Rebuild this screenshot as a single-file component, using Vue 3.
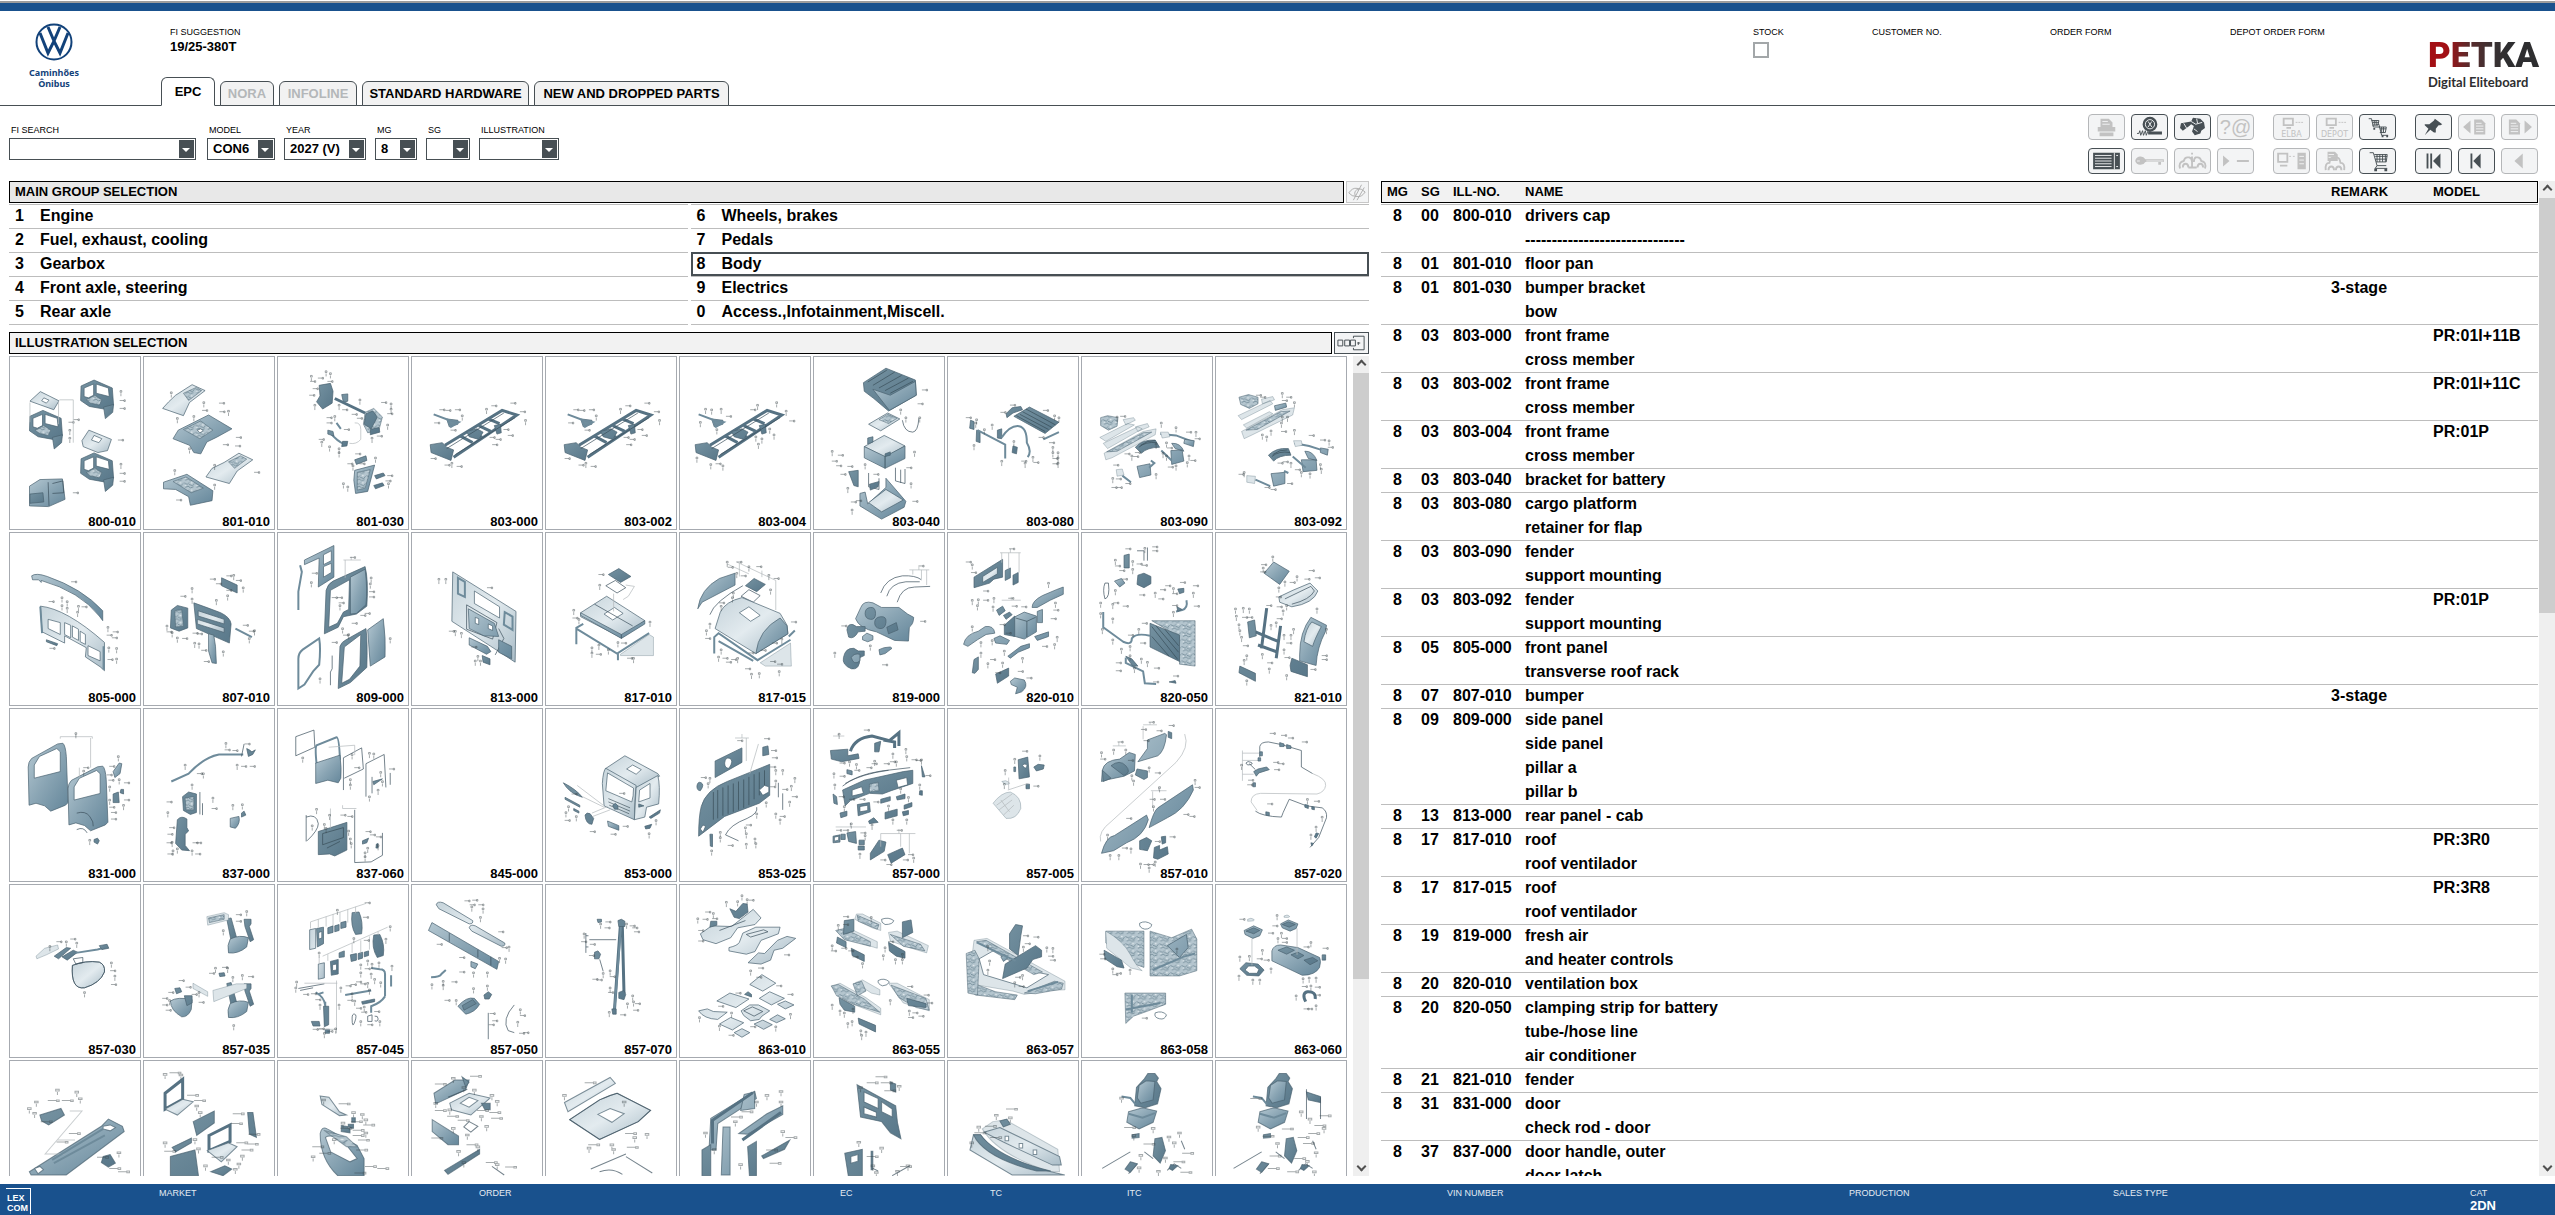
<script setup>
import { ref } from 'vue'

const tabs = [
  { label: 'EPC', state: 'active' },
  { label: 'NORA', state: 'off' },
  { label: 'INFOLINE', state: 'off' },
  { label: 'STANDARD HARDWARE', state: '' },
  { label: 'NEW AND DROPPED PARTS', state: '' }
]

const filters = [
  { id: 'fi', label: 'FI SEARCH', value: '' },
  { id: 'model', label: 'MODEL', value: 'CON6' },
  { id: 'year', label: 'YEAR', value: '2027 (V)' },
  { id: 'mg', label: 'MG', value: '8' },
  { id: 'sg', label: 'SG', value: '' },
  { id: 'ill', label: 'ILLUSTRATION', value: '' }
]

const groups = [
  ['1', 'Engine'], ['2', 'Fuel, exhaust, cooling'], ['3', 'Gearbox'], ['4', 'Front axle, steering'], ['5', 'Rear axle'],
  ['6', 'Wheels, brakes'], ['7', 'Pedals'], ['8', 'Body'], ['9', 'Electrics'], ['0', 'Access.,Infotainment,Miscell.']
]
const selected = ref('8')

/* Toolbar icons: f = filled, s = stroked, n = fine stroke, b = knocked out */
const doc = x => `M${x} 5h8l4 4v12h-12z`
const docLines = x => `M${x + 2} 9h6M${x + 2} 12h8M${x + 2} 15h8M${x + 2} 18h8`
const cars = (x, y) => `M${x} ${y + 8}q-1-8 4-8q1-6 4-6h4q3 0 4 6q5 0 4 8M${x + 3} ${y + 8}q0-4 3-4t3 4M${x + 11} ${y + 8}q0-4 3-4t3 4`
const toolbar = [
  [
    { name: 'Print', off: true, p: [['f', 'M12 4h9l4 4v7H12zM9 13h19v5H9zM11 19h15v4H11z'], ['b', 'M14 7h6M14 10h8']] },
    { name: 'Tyres', p: [['f', 'M11 10a8 8 0 1 0 16 0a8 8 0 1 0-16 0zM17 18h15v3H17z'], ['b', 'M14 10a5 5 0 1 0 10 0a5 5 0 1 0-10 0M17 7l4 6M21 7l-4 6'], ['n', 'M5 20h2l1-3l1 5l2-5l1 5l2-5l1 5l2-5']] },
    { name: 'Find', p: [['f', 'M5 14l1-5l11-2l2-4l8 1l4 4l1 6l-4 3l-1 3l-6 2l-3-4l2-6l-3-2l-2 2l-7 5z'], ['b', 'M17 7l5 3l7-2M20 15l4 3M9 9l3 5M23 4l1 5']] },
    { name: 'Help', off: true, text: '?@' },
    { name: 'List', p: [['f', 'M4 4h29v18H4z'], ['b', 'M6 7h18M6 10h18M6 13h18M6 16h18M6 19h18M27 4v18M29 7h2M29 19h2']] },
    { name: 'Key', off: true, p: [['f', 'M3 13a6 6 0 0 1 11-2h20v3h-3v3h-3v-3H14a6 6 0 0 1-11-1z'], ['b', 'M5 13h3M15 13h18']] },
    { name: 'Vehicle info', off: true, p: [['s', 'M5 21q-2-7 4-8q1-4 4-4h2q3 1 3 5v6M8 20q0-4 3-4t3 4M32 21q2-7-4-8q-1-4-4-4h-2q-2 1-2 5M24 20q0-4 3-4t3 4M18 4v2M18 8v7M14 20h9']] },
    { name: 'Next line', off: true, p: [['f', 'M5 7l7 6l-7 6zM20 12h13v2H20z']] }
  ],
  [
    { name: 'Elba', off: true, sub: 'ELBA', p: [['s', 'M10 4h10v7H10zM13 14h5'], ['n', 'M23 8h2M26 8h2M29 8h2']] },
    { name: 'Depot', off: true, sub: 'DEPOT', p: [['s', 'M10 4h10v7H10zM13 14h5'], ['n', 'M23 8h2M26 8h2M29 8h2']] },
    { name: 'Transfer carts', p: [['n', 'M9 4h3l2 9h7M12 6h8l-1 5h-6M13 8h7M15 6v5M17 6v5M17 10h3l3 12h7M20 13h8l-1 6h-6M21 15h7M23 13v6M25 13v6'], ['f', 'M14 14h2v2h-2zM23 22h2v2h-2zM28 22h2v2h-2z']] },
    { name: 'Server', off: true, p: [['s', 'M4 5h10v9H4zM6 18h8'], ['n', 'M16 8h2M20 8h2'], ['f', 'M25 4h9v18h-9z'], ['b', 'M27 8h5M27 12h5M27 16h5']] },
    { name: 'Vehicle sheet', off: true, p: [['f', 'M11 3h8l3 3v7H11z'], ['b', 'M12 6h6M12 9h8'], ['s', cars(9, 15)]] },
    { name: 'Cart', p: [['n', 'M10 4h4l4 14h10M15 6h14l-1 8H17M16 8h13M16 11h12M18 6v8M21 6v8M24 6v8M27 6v8M18 18l-2 3h13'], ['f', 'M15 21h3v3h-3zM26 21h3v3h-3z']] }
  ],
  [
    { name: 'Pin', p: [['f', 'M20 4l8 6l-2 1l-2 0l-3 4l0 4l-2 0l-4-3l-6 6l4-7l-4-4l0-1l5 0l5-4z']] },
    { name: 'Previous page', off: true, p: [['f', 'M4 13l8-7v14z'], ['f', doc(16)], ['b', docLines(16)]] },
    { name: 'Next page', off: true, p: [['f', 'M32 13l-8-7v14z'], ['f', doc(7)], ['b', docLines(7)]] },
    { name: 'First', p: [['s', 'M12 5v16M16 5v16'], ['f', 'M18 13l8-8v16z']] },
    { name: 'Back to start', p: [['s', 'M13 5v16'], ['f', 'M15 13l8-8v16z']] },
    { name: 'Back', off: true, p: [['f', 'M13 13l9-8v16z']] }
  ]
]

/* Exploded views. Each part is [style, path]; 'c' lists callout positions. */
const cab = (x, y) => [
  ['D', `M${184 + x} ${106 + y}l30-18l42 24l3 52l-22 12l-34-8l-20-18zm7 6l0 26l10 4l12-8l0-34zm28-12l0 28l30 10l-2-26z`],
  ['H', `M${196 + x} ${148 + y}l20-14l16 14l-6 16l-20-6z`],
  ['D', `M${236 + x} ${170 + y}l23-8l-2 24l-17 19z`],
  ['c', `${276 + x},${124 + y} ${276 + x},${150 + y} ${276 + x},${174 + y}`]
]
const frame = (x, y) => [
  ['F', `M${1010 + x} ${286 + y}L${1142 + x} ${180 + y}l34 14L${1030 + x} ${322 + y}`],
  ['F', `M${1046 + x} ${258 + y}l28 20M${1066 + x} ${242 + y}l30 20M${1088 + x} ${226 + y}l28 18M${1110 + x} ${206 + y}l26 14`],
  ['D', `M${976 + x} ${284 + y}l28-6l10 14l16 8l-6 32l-46-24z`],
  ['D', `M${1060 + x} ${244 + y}l24-8l14 10l-10 22l-22-8zM${1124 + x} ${226 + y}l14-4l2 26l-10 4zM${1014 + x} ${206 + y}l26 4l0 12l-20 8z`],
  ['K', `M${1014 + x} ${296 + y}L${1146 + x} ${188 + y}M${1034 + x} ${314 + y}L${1172 + x} ${202 + y}`],
  ['S', `M${984 + x} ${192 + y}l36 18l22 6l-18 14l-8-22`],
  ['c', `${1000 + x},${178 + y} ${1014 + x},${180 + y} ${1036 + x},${178 + y} ${1050 + x},${198 + y} ${988 + x},${218 + y} ${1026 + x},${240 + y} ${1106 + x},${178 + y} ${1120 + x},${166 + y} ${1164 + x},${158 + y} ${1186 + x},${184 + y} ${1196 + x},${212 + y} ${1158 + x},${256 + y} ${1148 + x},${238 + y} ${1116 + x},${262 + y} ${1130 + x},${268 + y} ${1122 + x},${284 + y} ${980 + x},${326 + y} ${1012 + x},${346 + y} ${1026 + x},${342 + y} ${1040 + x},${350 + y}`]
]
const mirror = (x, y) => [
  ['D', `M${516 + x} ${655 + y}l10-3l14 66l-14 4z`],
  ['M', `M${524 + x} ${716 + y}q22-14 42-4l-4 28q-20 22-42 18q-4-24 4-42z`],
  ['D', `M${556 + x} ${656 + y}l16 0l0 14l-4 8l10 40l-8 6l-12-46z`]
]
const seat = x => [
  ['D', `M${1282 + x} 84l4-16l8 0l4 14l-2 10l5 22l-4 46l-14 12l-12-6l2-56z`],
  ['M', `M${1276 + x} 104l8-14l10 2l-2 56l-14 10l-4-16z`],
  ['M', `M${1264 + x} 184l16-12l16 10l-4 34l-16 20l-14-20z`],
  ['S', `M${1264 + x} 190l16 12l14-14M${1256 + x} 138l10 4l6 20`],
  ['D', `M${1294 + x} 266l8-4l4 40l-6 38l-8-22z`],
  ['K', `M${1234 + x} 356l32-50M${1264 + x} 372l10-30M${1308 + x} 362l8-20l8 14M${1282 + x} 306l10 20M${1324 + x} 272l4 26`],
  ['D', `M${1266 + x} 336l8 6l-8 26l-6-10zM${1268 + x} 254l8-4l0 12l-8 2zM${1312 + x} 344l8 4l-6 14l-4-6z`],
  ['c', `${1256 + x},144 ${1262 + x},232 ${1292 + x},236 ${1270 + x},258 ${1284 + x},282 ${1310 + x},262 ${1316 + x},280 ${1322 + x},250 ${1328 + x},310 ${1278 + x},318 ${1306 + x},326 ${1318 + x},336 ${1276 + x},356 ${1298 + x},366 ${1326 + x},368`]
]
const door = (x, y, s) => ['M', `M${x} ${y + 80 * s}q0-16 8-26l60-${44 * s}l12-2q6 6 8 40l4 ${140 * s}l-6 8l-34 18l-14-16l-20-8l-16 6zm14-6l0 40l60-20l0-60l-8-10l-40 24z`]

const art = [
  { id: '800-010', at: [20, 18], p: [...cab(0, 0), ...cab(-118, 92), ...cab(0, 221), ['L', 'M66 152l24-29l43 28l-12 27z'], ['W', 'M98 142l12 7l-6 9l-11-7z'], ['L', 'M186 272l16-32l52 28l-9 34l-22 6l-34-18z'], ['W', 'M214 256l18 10l-7 12l-17-8z'], ['M', 'M65 410l24-20l52-2l6 62l-38 22l-44-2z'], ['D', 'M66 434l30-4l2 28l-32 4z'], ['K', 'M108 398l2 72M118 402l24-8l2 36l-26 2'], ['T', 'M134 148h32v130M66 156v60M132 152v70'], ['c', '170,208 168,430 272,270'] ] },
  { id: '801-010', at: [325, 18], p: [['L', 'M398 134l38-32l30 18l-36 36l-14 40l-48-22l14-20z'], ['H', 'M416 128l30-18l12 10l-30 30z'], ['M', 'M404 240l70-46l54 42l-36 26l-22 14l-14 36l-16-4l-10-22l-38-20z'], ['H', 'M416 238l40-26l28 28l-30 26z'], ['W', 'M448 240l8-4l6 6l-8 6z'], ['L', 'M510 338l34-28l32 20l-36 34l-18 38l-54-20l14-26z'], ['H', 'M520 336l28-18l14 10l-28 28z'], ['M', 'M370 398l54-24l60 50l-2 30l-50 14l-4-26l-30-22l-28-2z'], ['H', 'M392 396l30-14l40 34l-28 14z'], ['c', '388,128 402,206 463,158 501,158 520,184 540,262 510,284 440,200 430,298 488,348 582,368 396,364 402,452 488,408 462,180 538,288 502,184'] ] },
  { id: '801-030', at: [629, 18], p: [['D', 'M724 104l26-6l6 24l-2 36l-22 18l-14-22l8-18z'], ['H', 'M830 186l20-12l20 26l-8 40l-26 8l-10-26z'], ['D', 'M832 190l16-8l10 18l-14 36l-16-14zM776 132l14-2l0 22l-10 4zM842 238l20-6l2 14l-22 8z'], ['F', 'M760 144l70 44'], ['S', 'M750 248q14 24 34 36M764 218l10 18'], ['D', 'M744 240l12 4l2 14l-14-6zM778 274l12 0l-2 14l-12 2z'], ['T', 'M806 218q14-2 14 20v30q-10 16-26 12'], ['M', 'M806 362l46-16l-16 80l-28 6l-4-40z'], ['H', 'M812 368l30-8l-12 56l-18 6z'], ['D', 'M806 330l26-12l2 14l-24 12zM852 378l20-8l4 8l-20 10zM850 408l20-8l4 8l-20 10z'], ['c', '706,78 706,92 724,82 740,64 750,70 746,92 712,114 704,134 714,166 770,166 780,178 802,192 818,150 814,204 870,156 890,162 890,178 884,190 882,226 846,266 860,258 744,202 760,200 744,218 784,238 726,268 730,278 748,292 770,298 770,310 810,312 820,342 792,342 802,350 854,326 884,378 884,404 880,394 780,404 790,414'] ] },
  { id: '803-000', at: [934, 18], p: frame(0, 0) },
  { id: '803-002', at: [1238, 18], p: frame(304, 0) },
  { id: '803-004', at: [-25, 78], p: frame(-966, 60) },
  { id: '803-040', at: [280, 78], p: [['D', 'M394 156l52-44l68 36l2 46l-64 48l-34-38l-22-22z'], ['N', 'M404 154l44-36M416 164l50-40M430 172l52-38M444 180l54-38M456 188l52-36'], ['M', 'M416 176l40 18l58-42l2 42l-62 46z'], ['L', 'M406 282l44-34l28 18l-44 36z'], ['H', 'M430 268l20-16l22 12l-20 16z'], ['K', 'M484 270q4 36 24 36q12-2 14-42M490 418v44l-22-8v-40M480 420v40M406 430v42l24 8v-34'], ['L', 'M396 350l46-34l48 32l-46 34z'], ['M', 'M396 350l48 30v36l-48-32zM444 380l46-32v38l-46 30z'], ['D', 'M404 324l12-4l0 16l-12 6zM444 372l12-6l0 10l-12 4z'], ['M', 'M386 492l12-4l6 36l42-50l0-28l46 70l-4 18l-52 36l-50-40z'], ['L', 'M406 520l40-40l40 32l-50 36z'], ['D', 'M360 426l22-4l0 50l-10-4zM408 464l22-8l-2 16l-18 10z'], ['c', '532,178 522,220 524,264 480,240 492,264 512,368 322,366 338,376 324,394 334,408 360,410 398,406 344,434 420,434 496,414 504,464 358,478 368,518 380,514 510,516 368,544'] ] },
  { id: '803-080', at: [584, 78], p: [['D', 'M772 230l68 46l-32 34l-72-52z'], ['N', 'M764 236l68 48M756 244l68 48M750 252l66 46M742 256l66 48'], ['D', 'M718 250l14-18l20-4l4 10l-22 10l-14 14zM636 270l8 4l0 24l-10-4zM650 300l8 4v34l-9-4zM698 300l10-4v30l-10-2zM734 348l10 4l-2 20l-10-4z'], ['S', 'M652 300l64 44l0 42M708 322q20-38 40-34q18 4 18 50q12 26 2 44M804 328l36-22'], ['c', '628,262 650,270 648,280 644,348 668,300 686,286 708,246 730,224 736,336 806,240 830,258 840,264 796,322 820,338 826,354 826,370 828,386 828,402 838,370 838,386 838,402 756,394 780,384 784,398 762,402 708,396'] ] },
  { id: '803-090', at: [889, 78], p: [['H', 'M932 262l16-6l24 6l-2 26l-20 12l-18-14z'], ['P', 'M930 322l64-42l16 4l-66 50zM938 340l80-50l10 6l-80 60zM984 268l24-6l4 8l-22 14zM1012 290l28-10l4 10l-26 14z'], ['P', 'M940 370l90-66l30-8l-2 18l-100 70l-14 6z'], ['H', 'M946 366l84-58l20-2l-80 58z'], ['D', 'M1012 352q16-24 46-22l10 22q-28 0-42 18z'], ['N', 'M1024 346q16-16 34-14M1020 352q16-18 42-14'], ['M', 'M1094 362l26-2l4 34l-28 10zM1096 340q20-2 28 24l-20-8zM1016 410l30-8l2 34l-26 8z'], ['S', 'M1070 312l36 4l40 20M1072 362l24 30M982 438l20 20M1048 392l8 8l-12 14'], ['P', 'M1070 306l18 0l4 14l-18 4zM968 420l14-2l4 18l-16 4z'], ['M', 'M1126 328l22 4l-2 18l-22-10z'], ['c', '970,262 980,258 1072,280 1106,294 1132,306 1152,308 1152,326 1060,344 1084,340 1088,354 1076,372 1084,380 1136,380 1132,400 1142,392 1090,412 1106,410 990,372 1004,380 1014,368 1010,380 1060,436 964,406 960,448 970,448 960,474 972,474 992,462'] ] },
  { id: '803-092', at: [1193, 78], p: [['H', 'M1246 200l22-8l22 8l0 20l-20 14l-20-12z'], ['P', 'M1244 256l74-46l6 10l-72 48zM1256 284l60-40l8 6l-60 44zM1298 206l26-8l4 10l-28 12z'], ['M', 'M1328 226l26-8l2 12l-26 10z'], ['P', 'M1252 304l94-66l28-6l-4 22l-96 62l-16 10z'], ['H', 'M1262 300l80-56l22-2l-76 56z'], ['D', 'M1314 376q18-24 46-20l6 20q-28 0-40 18z'], ['N', 'M1324 374q16-16 34-14M1322 380q16-18 42-12'], ['M', 'M1390 390l34 0l2 32l-32 4zM1398 364q18-2 28 28l-20-6zM1320 432l32-4l0 34l-26 8zM1434 354l18 4l-2 18l-16-8z'], ['S', 'M1374 340l34 8l28 12M1370 380l30 34M1284 450l34 20M1350 424l10 6'], ['P', 'M1372 332l18 0l2 14l-16 4zM1264 438l20 2l-2 22l-18-4z'], ['c', '1288,194 1298,200 1346,190 1358,200 1348,210 1374,218 1346,262 1358,262 1344,280 1346,304 1320,304 1300,316 1310,322 1374,302 1410,316 1436,330 1454,334 1454,352 1248,434 1258,430 1338,400 1350,396 1366,402 1378,420 1390,430 1410,434 1434,406 1436,420 1360,462 1308,474 1322,480'] ] },

  { id: '805-000', at: [20, 546], p: [['M', 'M70 676q10-10 36 2q80 36 128 104l0 30l-8-14q-44-74-134-108l0 6l-6-8l-14 0z'], ['L', 'M90 768q60 8 148 110l0 86l-10-12l-34-30l2-28l-50-36l0 22l-52-34z'], ['W', 'M108 808l28 10v36l-28-18zM146 818l14 8v38l-14-10zM164 828l14 10v34l-14-10zM182 844l12 10v30l-12-8zM200 888l28 18v28l-28-16z'], ['D', 'M104 870l26 12l-2 6l-24-12z'], ['S', 'M236 890v70M90 770l4 80'], ['c', '112,754 164,694 140,744 140,768 152,756 152,776 178,770 188,770 176,788 114,896 246,834 246,856 260,846 258,864 248,896 266,898 248,930 266,930'] ] },
  { id: '807-010', at: [325, 546], p: [['D', 'M504 682l36 22v24l-36-22zM440 758q30 14 62 30q22 14 24 34l-4 58l-76-44z'], ['L', 'M450 782l60 26v14l-60-24zM448 808l62 26v14l-62-26z'], ['D', 'M388 780l14-14l24 8v60l-20 10l-20-10z'], ['H', 'M396 782l16-4l4 50l-18 4z'], ['M', 'M474 852l12 4l4 34l2 52l-10-2l-8-36z'], ['S', 'M536 836l38 26'], ['c', '480,686 494,700 518,676 532,676 540,690 554,714 518,720 518,738 412,738 436,716 436,748 492,752 378,830 380,846 390,850 402,866 416,866 440,850 450,852 442,882 452,884 460,902 508,908 466,936 556,826 570,844 580,844 568,868'] ] },
  { id: '809-000', at: [629, 546], p: [['M', 'M690 628l68-44v96l-36 30l2-88l-34 20z'], ['W', 'M734 612l18-12v30l-18 12zM734 648l18-10v28l-18 14z'], ['S', 'M680 644l4 20l-8 60v56'], ['D', 'M740 720q4-20 16-28l74-44q8 40 4 120l-24 24l-30 8l-12 32l-32 20zm10 0l-4 112l20-12l14-34l12-8l2-90z'], ['M', 'M796 680l34-24q6 60 2 108l-22 26l-14 2z'], ['D', 'M772 890q4-14 14-20l46-34q4 40 2 118l-38 46l-28 18zm10 2l-6 110l18-12l24-40l2-96z'], ['M', 'M836 840l36-34q6 60 4 116l-34 28z'], ['S', 'M676 1018v-90q0-18 10-28l38-34q4 30 0 80l-14 20l-20 40z'], ['K', 'M754 918v40l-4 10v40'], ['T', 'M774 650h0M780 628h40M784 628v54M798 618v10'], ['c', '710,668 706,698 798,620 844,684 842,702 842,724 842,740 756,742 768,742 772,758 772,768 822,796 832,790 778,838 782,856 792,856 802,820 756,878 726,990 888,868'] ] },
  { id: '813-000', at: [934, 546], p: [['L', 'M1028 664l146 120l-2 154l-56-48l-90-76z'], ['W', 'M1078 722l58 48v34l-58-44z'], ['S', 'M1040 682l16 12v46l-16-10zM1148 786l18 14v40l-20-16z'], ['K', 'M1060 764l70 54l-10 50l-60-30zM1134 836l12 30l-20 50'], ['M', 'M1064 776l60 44l10 40l-34-2l-34-22zM1134 870l30 20v38l-30-20z'], ['W', 'M1080 802l8 4v18l-8-4zM1110 822l10 6v14l-10-6z'], ['M', 'M1066 864l42 26l8 16l-10 8l-40-28z'], ['D', 'M1096 918l18 10v18l-16-8z'], ['c', '996,688 1012,688 1110,712 1022,844 1034,846 1048,852 1074,892 1086,922 1080,936 1092,936'] ] },
  { id: '817-010', at: [1238, 546], p: [['D', 'M1382 672l24-18l28 24l-24 18z'], ['K', 'M1376 706l22-16l24 22l-20 16z'], ['L', 'M1318 788l60-50l88 74l-54 52l-94-64z'], ['W', 'M1372 792l24-20l20 18l-24 20z'], ['M', 'M1318 788l94 66v12l-94-70zM1412 854l54-42v10l-54 44z'], ['K', 'M1350 762l88 66'], ['S', 'M1308 884v-50l16-12M1308 836l94 76l74-62M1404 912l0 20'], ['P', 'M1410 914l66-60l10 8v56l-76 0z'], ['T', 'M1422 704l20 4l-14 30l-12 10M1394 730v54'], ['c', '1362,672 1362,706 1302,782 1302,804 1314,810 1344,896 1344,912 1356,914 1360,888 1382,902 1404,880 1414,880 1428,926 1440,928 1478,818'] ] },
  { id: '817-015', at: [-25, 606], p: [['M', 'M16 836q6-60 50-92l36-16v36l-76 52z'], ['D', 'M126 766l20-22l26 18l-20 22z'], ['K', 'M116 798l18-20l26 18l-16 20zM44 854q10-40 76-88'], ['L', 'M56 896L68 846Q80 814 118 802L206 850L222 886L224 912L150 972z'], ['M', 'M150 972Q156 900 206 864L222 888L224 912z'], ['W', 'M112 848l22-18l26 26l-22 18z'], ['S', 'M54 972v-50l10-12l90 82l76-62M64 934l80 60M226 920l14-18'], ['P', 'M160 1000l70-60l2 70l-60 0z'], ['T', 'M84 700l50 30M106 694l90 56v90M112 698v40M164 720v20'], ['c', '84,696 88,710 108,694 106,730 118,736 134,710 154,708 180,736 194,744 184,780 98,790 96,804 68,818 70,830 44,884 36,904 36,926 70,962 64,984 76,986 96,990 108,988 84,998 136,970 164,962 190,940 210,930 234,876 186,996 202,1004 128,1018 140,1036 158,1034 204,1028'] ] },
  { id: '819-000', at: [280, 606], p: [['K', 'M434 788q12-46 50-52q30-2 44 12M448 798q8-40 44-44l32 0M472 816q10-46 40-46l36-2'], ['M', 'M388 832q6-22 28-14l20 14l40 0l20 20l14 10q0 20-10 30l-2 42l-32-2l-42-26q-40-10-48-40z'], ['D', 'M398 850q0-16 12-18t12 18t-12 18t-12-18M420 878q0-16 14-18t12 18t-14 18t-12-18M448 892l22-14l4 22l-22 12z'], ['D', 'M356 900q2-20 14-16l8 6l20 0v14l-16 2q-10 24-22 16zM348 984q4-30 24-28l10 8l14 0l0 14l-10 6q0 40-20 34q-22-12-18-34z'], ['M', 'M366 984q6-14 20-10l0 20q-14 16-20-10zM392 920l10-10l14 8v12l-12 6l-12-6zM430 960l12-6l14-2l4 4l-16 16l-12 4z'], ['T', 'M500 718h46M522 708v10M508 718v14M528 718v28M540 718v46'], ['c', '346,888 528,874 410,950 328,972 440,1006 524,706'] ] },
  { id: '820-010', at: [584, 606], p: [['D', 'M644 740l66-54v54l-20 6l-10 12l-36 14z'], ['L', 'M664 738l34-28v20l-34 26z'], ['D', 'M716 720l12-8v30l-12 8zM734 734l12-8v30l-12 8z'], ['M', 'M778 832q0-20 24-36l32-18l16-8v22l-30 18l-30 22z'], ['M', 'M736 862l24-16l28 12v48l-28 22l-26-10z'], ['N', 'M740 864l26 10l20-12M766 874v48'], ['D', 'M714 886l24-28v62l-24-6zM696 840l14-12l6 14l-14 14zM712 856l14-10l6 8l-14 14z'], ['M', 'M620 944q4-30 34-40l16-14q20-4 22 20l-20 4l-20 16l-22 20zM690 926l14-8l22 14l-6 12l-26-4zM722 980l30-30l20-8v12l-26 14l-18 18zM784 920l32-14v14l-26 12zM790 844l12-6v40l-12 0z'], ['D', 'M694 1034l30-18v24l-26 22zM640 1030l4-40l10-8v38l-8 12z'], ['M', 'M728 1056l10-10l22 6q10 20-6 36l-14 6l4-20l-14-8z'], ['T', 'M704 666h48M728 654v12M708 666v30M724 666v50M748 666v60M708 810h44M730 800v10'], ['c', '628,694 640,704 728,654 640,726 816,760 832,820 830,840 668,782 640,812 654,810 668,810 690,806 652,828 688,832 726,804 756,830 706,884 640,892 824,866 836,924 830,946 804,950 686,934 660,940 714,966 756,988 660,972 684,990 676,1004 696,1030 710,1002 748,1026 768,1046 720,910 734,828'] ] },
  { id: '820-050', at: [889, 606], p: [['D', 'M986 674l12-4v42l-12 0zM1018 734l14-6l16 10v22l-16 12l-16-10z'], ['M', 'M964 752l16-8l8 14l-12 12z'], ['H', 'M1050 872h100v138l-36-6v-82z'], ['D', 'M1046 880l68 36v80l-68-44z'], ['N', 'M1050 890l60 100M1050 920l40 60M1060 888l52 80M1080 898l32 50'], ['S', 'M938 846v46l46 44q20 12 20-10q10-18 42-8M990 984v16l40 26l4 36l26 2M1130 810q4 24-10 30l-14 4'], ['K', 'M942 758q-6 20 0 48q12-4 8-48zM1016 660h16v30M1040 650v40'], ['D', 'M1110 776l14-2l0 12l-10 4zM1108 830l12 8l-10 6zM990 980l14 8l14 22l-12 0zM1090 1058l14-4l2 8z'], ['c', '992,654 966,690 968,706 1006,694 1018,700 1006,718 1030,704 1034,654 1054,660 1054,648 978,720 984,746 1024,794 966,782 986,828 960,824 964,818 932,820 932,852 960,868 936,900 998,916 960,932 1000,952 1030,880 1020,900 1026,940 1058,790 1068,806 1084,766 1072,778 1100,776 1100,790 1118,756 1148,766 1146,790 1100,826 1150,828 1100,848 980,960 970,1000 970,1024 1000,980 1010,1018 1040,1000 1058,1016 1056,1058 1102,1040 1026,990'] ] },
  { id: '821-010', at: [1193, 606], p: [['M', 'M1304 728l22-34l36 28l-22 40z'], ['L', 'M1338 800q30-20 72-42l18 24q-10 38-60 48l-28-14z'], ['K', 'M1352 806l60-38l8 14q-10 26-52 40'], ['M', 'M1386 976q0-70 26-114l36 24l-2 18q-20 50-22 104l-38-14z'], ['L', 'M1396 936q4-40 18-60l22 14q-16 40-20 60z'], ['F', 'M1310 834l-12 122M1342 888l-10 98M1284 906l54 30M1290 946l46 22'], ['D', 'M1266 876l16-6l4 48l-16 6zM1364 1008l4-22l36 20v36l-38-16zM1246 1030l2-20l36 22v24z'], ['c', '1324,680 1300,702 1302,714 1298,724 1352,756 1366,756 1380,740 1410,720 1400,746 1424,742 1338,774 1334,800 1336,830 1348,844 1356,828 1238,838 1256,836 1270,838 1240,860 1256,862 1268,862 1312,826 1320,888 1336,866 1332,880 1246,886 1248,904 1426,838 1448,900 1372,900 1366,918 1350,918 1252,924 1258,948 1358,940 1300,976 1350,962 1264,980 1258,994 1314,1000 1316,1020 1414,1020 1440,990 1440,978 1356,1040 1264,1056 1354,984'] ] },

  { id: '831-000', at: [20, 24], p: [door(62, 120, 1), door(154, 192, 0.93), ['M', 'M258 214l14-26l6 2l-4 30l-12 12z'], ['D', 'M258 282l12-6l2 32l-14 0zM276 268l6 0v14l-8-4zM214 420l8-4l4 8l-4 10l-8-6z'], ['T', 'M136 114v-6h74v6M172 100v8M206 112v90M180 202v30'], ['K', 'M174 340q20-8 30 10t8 30M174 390q16-10 24 10'], ['c', '172,100 192,202 190,214 252,198 246,224 270,170 250,240 272,240 286,248 250,262 250,302 252,322 282,318 286,300 256,338 256,358 204,424'] ] },
  { id: '837-000', at: [325, 24], p: [['S', 'M388 244l40-24q36-50 70-58l56 0'], ['D', 'M562 144l6 4l6 6l8-6l-6 14l-10 6zM414 290l14-14l18 6v56l-14 6l-16-12z'], ['H', 'M420 294l20-4v40l-18 0z'], ['D', 'M402 360q10-14 22-2l0 26l4 10l-8 10v34l10 16l-18-2l-14-20z'], ['M', 'M524 356l20-6q4 20-8 36l-12-4z'], ['K', 'M454 276v68M460 310v36M556 130l-6 38'], ['D', 'M550 340l6-6l4 12l-10 6z'], ['c', '514,130 560,130 514,148 532,150 540,196 552,198 572,198 420,196 450,220 462,222 436,256 380,306 380,340 484,296 484,326 552,316 530,318 386,384 382,404 380,430 390,430 382,464 392,456 402,450 440,430 448,430 446,464 436,456'] ] },
  { id: '837-060', at: [629, 24], p: [['K', 'M670 108l42-20l2 52l-44 26zM780 270v-98l42-30l4 64l-44 28M832 290v-100l42-28l4 100M846 230v50M888 218v36M806 330v160l38-2l26-20v-68M694 346v80M694 352q24-12 28 20q0 20-26 52'], ['S', 'M718 190q-4-50 0-56l46-24q6 0 8 68'], ['M', 'M716 188l56-24q4 40 2 70l-6 14l-24-8l-28 10z'], ['D', 'M722 396l66-28v84l-28 18l-12-6l-26 2z'], ['N', 'M732 402l48-18v30l-48 22zM742 446l30-20'], ['D', 'M848 244l22-8l-20 18zM824 424l14-8l-4 14l-10 4zM856 434l4-2v14l-5 0z'], ['T', 'M778 326h32M778 316v10M750 326v60M746 140l60-6v30'], ['c', '686,174 800,164 840,160 850,162 808,202 796,240 796,256 888,206 866,218 870,246 860,272 840,292 718,330 708,380 736,376 740,388 748,348 776,346 792,350 834,396 844,406 858,412 860,440 836,448 830,462 830,474 792,396 796,420 798,434'] ] },
  { id: '845-000', at: [934, 24], p: [] },
  { id: '853-000', at: [1238, 24], p: [['L', 'M1374 206l46-40l76 54l4 8l-50 36z'], ['W', 'M1424 206l14-12l20 14l-12 14z'], ['L', 'M1368 250q2-40 8-46l70 52q-4 50-4 104l-70-42z'], ['W', 'M1380 218l60 46q0 26-4 42l-60-34z'], ['L', 'M1446 262l50-36q6 30 2 86l-28 10l-4 30l-24 8z'], ['W', 'M1454 270l24-20v44l-26 12z'], ['N', 'M1382 296l50 28M1382 306l50 28M1384 316l46 26'], ['D', 'M1392 316l6-6l6 8v10l-8 0zM1328 346q4-10 12-4l8 14l-4 18q-14 0-16-28zM1282 292l34 24l0 6l-34-24zM1278 248q30 20 44 44l-8-4q-24-12-36-40zM1302 326l12 8l0 6l-12-8zM1452 312l12 6l-12 4zM1476 352l26-22l-2 10l-20 16zM1466 380l16-6l-4 12l-10 2z'], ['M', 'M1380 364l26 14v14l-24-12z'], ['T', 'M1322 290l50 32M1344 340l36-20M1346 350l40-20M1310 256l60 60'], ['c', '1300,282 1410,280 1290,322 1284,340 1308,352 1284,362 1342,396 1390,404 1492,364 1476,404 1418,380'] ] },
  { id: '853-025', at: [-25, 24], p: [['D', 'M56 182l62-40v44l-62 46z'], ['W', 'M78 188q2-20 12-14t-2 30q-10 0-10-16z'], ['D', 'M18 410q0-60 6-90q10-50 60-76l98-52v94l-24 24l-80 40z'], ['N', 'M52 276v84M62 270v86M74 262v86M86 256v86M98 250v86M110 244v86M122 238v86M134 230v86M146 222v76M158 216v70M170 210v50'], ['W', 'M158 270l12-14l10 4v16l-14 10zM22 388l6-12l6 4l-6 18z'], ['D', 'M166 140l12-4l2 26l-14 4zM14 258q2-16 10-10t-2 24q-8 0-8-14zM44 404l6 0v38l-5-2z'], ['K', 'M202 248v44M212 280v50M152 322q4 18-22 34q-40 20-50 50l30 18'], ['T', 'M102 112h32M118 100v12M128 112v70M156 130l-20 90'], ['c', '110,120 172,114 188,150 190,172 26,232 44,236 40,252 186,200 196,212 212,212 196,244 186,260 240,236 232,260 236,290 228,308 174,310 214,268 196,344 208,350 206,362 152,344 68,400 130,376 126,386 128,404 88,438 148,420 128,436 150,434 48,456 68,416'] ] },
  { id: '857-000', at: [280, 24], p: [['D', 'M318 150l40-4l0 20l24-6l2 14l-40 10l-24-8zM420 128l14-6l-4 32l-10 0z'], ['F', 'M364 152q10-40 50-46l40 14l22-24l0 40M440 118l26 6v18'], ['K', 'M346 258q30-34 90-46l66-10M352 250q40-30 100-40'], ['D', 'M346 270l50-30l90-26l22-4v40l-50 22l-20 10l-30-2l-44 22l-12 16zm22 0l0 18l26-8l-4-20zm102-30l4 22l22-8l-2-22z'], ['H', 'M408 252l20-6l2 26l-22 4z'], ['D', 'M324 282l8 8l2 24l-8-4zM340 340l16-6v14l-14 6zM380 314l28-6l2 28l-28 12zm6 6v16l18-4v-16zM434 298l22-8v12l-22 8zM470 290l20-8v14l-18 4zM488 316l18-8v12l-18 8zM444 338l28-10v20l-28 10zM406 364l12-10l10 14l-20 4zM528 196l8 34l-6 0zM484 336l14-4v12l-12 4z'], ['D', 'M324 410l16-4v22l-16 2zm3 3v12l10-3v-12zM342 404h10v16h-10zM356 400l20-4l2 36l-18-6zM384 422h12v14h-12zM382 440h14v12h-14zM410 462l20-40l16 6l-4 28l-32 26zM450 466l34-20l6 20l-32 26z'], ['D', 'M524 272l6 0v14l-7-2zM356 208l12 4v12l-12-4z'], ['T', 'M330 382h70M364 370v12M434 402h80M476 388v14M324 106h26M336 100v6M434 402v40M480 402v40M500 402v60'], ['c', '338,102 398,88 416,190 342,188 362,186 378,194 326,222 342,228 376,210 404,202 420,184 444,190 462,162 458,184 470,186 492,148 494,170 508,178 518,180 528,180 540,226 524,256 328,256 340,290 364,298 388,298 350,322 420,306 480,268 498,294 452,320 462,362 494,362 414,378 366,374 334,392 350,392 390,400 398,410 386,466 474,392 436,482 450,496 500,466 510,478 488,482'] ] },
  { id: '857-005', at: [584, 24], p: [['D', 'M746 178l22-8l4 60l-24 6z'], ['W', 'M756 196q2-8 8-4t-2 12z'], ['D', 'M782 200l10-8l14 2l-2 12l-16 6zM764 252l8 0l0 14l-8 0zM736 200l4 0v14h-4z'], ['P', 'M688 310q20-34 40-34q26 14 24 50q-10 34-34 30z'], ['T', 'M696 316l36-34M702 330l30-30M712 346l24-30M706 300l20 36'], ['P', 'M708 244q10-6 16 2t-8 6z'], ['T', 'M722 270l46-20M724 232v36'], ['c', '716,212 758,152 738,178 796,168 784,258 714,254'] ] },
  { id: '857-010', at: [889, 24], p: [['M', 'M936 210q4-30 40-34l22-20l14 6l-2 50l-24 16l-36 10l-16 6z'], ['D', 'M936 210l20 24l-18 10zM956 196q20-20 34 0t-4 30z'], ['M', 'M1018 184l22-40v-26l40-20l4 4q-4 50-20 64zM1044 384q10-50 20-60l80-70l2 16q-20 60-60 84zM934 462q10-50 30-54l74-62l4 14q-10 50-50 70l-30 24z'], ['D', 'M1016 206l24 6v20l-8 6l-20-14zM1088 92l8 4v18l-8-4zM1022 424l16-10l12 10l-10 30l-18-4zM1056 444l12-6l0 14l18-10l2 22l-24 16l-10-4zM1072 412l10-2v20l-8 4z'], ['T', 'M1126 100q12 40-20 86l-150 180q-30 30-24 60M1030 72h32M1046 64v8M1030 76v40M960 136h30M974 124v12M1048 272h36M1066 262v10M1052 274v50'], ['c', '1046,64 1092,74 1028,86 1064,90 1034,120 974,124 934,158 934,176 962,150 990,150 998,180 1044,204 1060,218 1004,228 1008,244 1068,264 1150,242 1152,262 1048,298 1072,298 1054,322 1126,344 1140,350 994,356 948,408 984,446 1002,450 954,470 974,470 1094,412 1060,426 1024,496 1034,496 1046,496 1058,490 1044,508'] ] },
  { id: '857-020', at: [1193, 24], p: [['K', 'M1294 170v-32q2-14 20-14l30 8l46 18v50l26 20M1284 334q16 16 60 18l4-14l14-40l40 20l36 6q12 10 10 30l-18 60l-20 30'], ['T', 'M1416 220q32 16 30 36t-20 26l-130-2q-22 2-22 26l14 26M1254 150v92M1254 158h40M1254 180h40M1254 222h26'], ['D', 'M1280 214l10-8l20-6l6 8l-24 10l-6 10zM1294 154l6 0v12h-6zM1340 126l10 4v8h-10zM1356 132l10 4v8h-10zM1290 172l6 0v10h-6zM1278 248l6 0v12h-6zM1308 336l8 2v10l-8-2zM1398 314l8 2v10l-8-4zM1414 320l6 2v8l-6-2zM1424 400l6 2l-6 14l-4-4zM1412 430l6 2l-4 8z'], ['K', 'M1262 188q4-8 12-2t-8 8zM1270 190l14 18'], ['c', '1320,98 1346,104 1362,112 1394,124 1252,196 1270,240 1268,254 1328,186 1340,190 1330,208 1314,312 1404,300 1422,304 1438,354 1424,384 1412,408'] ] },

  { id: '857-030', at: [20, 552], p: [['P', 'M80 768l20-24l30-10l2 12l-28 18l-22 12z'], ['D', 'M122 768l28-26l10 2l-28 32zM140 770l26-20l10 6l-24 24z'], ['S', 'M172 758l50-10l22-8'], ['D', 'M226 736l18-4l4 12l-16 4z'], ['L', 'M164 796q30-16 62-10q14 8 12 30q-10 34-46 48q-32 6-28-68z'], ['K', 'M164 796q30-16 62-10q14 8 12 30q-10 34-46 48q-32 6-28-68M166 776l22-4l0 16l-16 4z'], ['c', '112,740 130,724 162,716 150,726 174,730 254,790 254,812 262,830 192,880 256,854'] ] },
  { id: '857-035', at: [325, 552], p: [...mirror(0, 0), ...mirror(0, 196), ['P', 'M470 648l40-12l10 6v16l-48 16zM484 872l54-20l24 0v14l-76 40zM438 850l34 26v14l-34-24z'], ['H', 'M474 652l36-10l0 14l-34 10z'], ['M', 'M386 904q16-14 50-4l-2 30q-8 24-22 22q-26-20-26-48z'], ['D', 'M418 888l18 0l0 22l-12 8zM396 866l12-2l4 12l-12 6zM498 820l12-2l2 10l-12 2z'], ['c', '540,642 562,634 508,692 540,662 490,806 508,802 518,806 530,834 552,828 568,830 478,820 408,842 424,862 384,878 370,896 384,904 370,916 378,932 452,880 454,908 438,884 532,980'] ] },
  { id: '857-045', at: [629, 552], p: [['D', 'M800 636l16-2q10 30 6 66l-14 2q-12-26-8-66zM850 704l14-2q12 30 8 64l-14 6q-14-30-8-68z'], ['L', 'M702 688l14-4v60l-14 4zM722 792l14-4v46l-14 4z'], ['D', 'M718 684l16-4v50l-14 10zm5 12v20l7-3v-20zM750 784l18-6v44l-16 4zm5 10v18l9-2v-18z'], ['S', 'M876 890v-68q0-14-12-14l-20-4M876 890q-10 20-32 30v20M738 906v70M890 826v34M784 886l60-14M716 878q20 14 22 40M720 884l14-6'], ['D', 'M744 682l12-6v20l-12 4zM760 676l10-4v18l-10 4zM774 666l12-4v18l-12 4zM796 764l14-4v20l-12 4zM814 760l10-4v18l-10 4zM828 756l10-4v14l-10 4zM770 758l12-6v18l-12 2zM734 920l12 0v56l-10 6zM706 966l18 0l2 14l-16 0zM822 906l30-8v8l-28 8zM738 990h10v12h-10z'], ['K', 'M676 866l60-14M680 872l30-8M800 956q0-14 6-12t0 24t-6-12M852 950q8-2 8 8t-8 6M836 950l10-4v20h-10z'], ['T', 'M704 664l128-56M732 768l150-88M704 664v20M722 656v24M740 648v30M756 640v36M772 634v30M790 626v40M808 618v20M724 772v20M744 762v20M800 728v30M820 720v40M840 708v40M860 694v10M764 842v160M690 850h76M720 990h44'], ['c', '766,630 832,606 828,650 804,716 888,680 830,720 878,718 724,760 836,784 820,796 832,806 846,794 862,790 892,800 820,820 844,824 852,840 866,850 672,848 670,866 690,884 708,882 718,900 726,918 774,866 788,858 800,854 812,846 822,852 836,852 840,872 800,884 792,902 806,906 812,926 828,924 770,918 824,938 854,936 820,968 838,976 864,968 712,990 726,988 736,1004 762,990 746,996'] ] },
  { id: '857-050', at: [934, 552], p: [['L', 'M990 612q2-12 16-6l68 54q2 10-8 10l-70-46zM1066 682q2-12 14-6l68 52q2 10-8 10l-68-46z'], ['M', 'M972 690l8-24l154 118l-4 24z'], ['K', 'M1020 698v26M1086 748v24M1116 770v26M1110 940v80M1170 916q-30 44-14 78l14 6'], ['S', 'M978 832q20 0 24-10l10-12'], ['M', 'M1070 784l16 8l-6 14l-10-6zM1040 920q20-30 38-24l12 18q-10 24-32 30z'], ['D', 'M1050 918l24-18l8 12l-28 20zM1100 886l10-10l8 8l-6 14l-10 0z'], ['c', '1058,600 1076,598 1070,612 1090,612 1072,620 1098,626 1092,652 1136,694 1144,742 1158,742 994,732 1046,772 1150,778 1136,776 1076,820 1108,820 1046,816 980,856 1006,846 1028,846 1006,858 1108,860 1076,868 1012,902 1036,904 1184,932 1186,948 1116,942 1122,964 1178,970 1194,1000 1184,1002 1114,976'] ] },
  { id: '857-070', at: [1238, 552], p: [['F', 'M1410 668l-14 264M1414 670l4 210'], ['S', 'M1412 660l-16 272'], ['D', 'M1404 660l8-4l8 6v16h-14zM1406 878l12-6l4 12l-4 16l-12-4zM1350 756l8-4l6 10l-4 14l-10 0zM1356 656l10 0l0 8l-8 2zM1390 928l10 0l0 16l-8 0z'], ['K', 'M1362 778l8 36M1338 718h62M1330 698v60M1330 706h6M1330 740h6'], ['c', '1378,664 1364,672 1376,682 1424,672 1434,676 1440,682 1444,694 1326,702 1322,724 1342,732 1340,766 1370,822 1386,814 1348,838 1358,840 1388,830 1386,866 1384,878 1438,890 1440,908 1446,912 1426,914 1442,932 1384,940 1412,946'] ] },
  { id: '863-010', at: [-25, 552], p: [['L', 'M22 700l26-24l46 2l50-52l18 26l-14 20l-40 10l-16 30l-34 18l-30-12zM88 742q20-6 24-16l8-28l30-18l56 0l-4 20l-40 20l-14 34l-20 8l-40-10zM132 788l24-30l14 2l30-40l22-12l20 6l-30 30l-20 6l-8 30l-22 12z'], ['D', 'M46 662l14 0l0 12l-16 6zM90 624l14 8l16-24l10 2l2 24l-20 20l-12-4z'], ['L', 'M136 854l28-30l32 26l-30 24zM60 904l30-24l44 18l-30 26zM158 896l24-20l34 20l-30 20zM200 914l18-10l20 12l-20 12zM18 934l20-6l14 8l32 2l-22 22q-32-2-44-26zM116 934l20-18h20l26 18l-18 16l-6 10l-20 4l-16-16zM66 974l26-20l30 16l-26 22zM182 960l18-14l18 12l-20 12zM146 974l20-12l22 14l-20 14zM100 1000l18-12l18 12l-18 14z'], ['K', 'M128 702l40-14l10 6l-40 16zM122 934l20-12l24 14l-20 14zM66 690l60-30'], ['D', 'M124 884l8-8l8 8v8z'], ['c', '16,656 36,634 30,656 52,640 52,654 82,606 108,604 118,586 130,598 136,598 20,690 20,722 218,764 138,814 158,804 154,832 66,920 106,880 200,858 226,884 230,946 20,956 94,942 66,982 196,984 140,982 90,1008'] ] },
  { id: '863-055', at: [280, 552], p: [['P', 'M378 640l14 0l42 28v22l-20-8l-40-26zM336 690l26-6l64 40v20l-74-30zM452 696l20-4l72 44l-4 22l-40-16l-44-20z'], ['H', 'M330 690l20-6l60 40v14l-60-20zM456 702l70 30l10 20l-50-14zM380 644l50 28l-4 14l-44-24z'], ['D', 'M350 660l22-4v36l-24 10zM484 664l20-6l4 38l-24 16zM334 710l20 14v18l-22-14zM366 744l30 20v20l-28-18zM452 726l38 28v20l-20-6l-16-16z'], ['P', 'M320 860l20-10l60 44l34 32v20l-80-40zM376 848l16-8l40 30v16l-20-6zM452 850l20 0l74 50v34l-60-24z'], ['H', 'M320 858l16-4l60 44l36 40l-60-24l-40-26zM458 856l80 40l8 36l-30-8l-40-30zM370 852l20-8l10 30l-20 14z'], ['D', 'M338 894l36 26v18l-24-6l-10-18zM382 956l40 22v20l-38-24zM494 896l44 16v12l-40-6z'], ['W', 'M436 656q16-8 28 4q-2 12-20 12q-10-6-8-16zM428 842q14-10 26 4q-4 12-16 12q-12-6-10-16z'], ['c', '350,648 350,672 336,676 322,738 322,752 346,744 362,752 372,770 392,792 412,652 440,768 444,744 468,780 484,780 484,764 454,724 322,918 340,936 350,942 358,974 368,968 370,930 400,1000 388,996 390,1010 498,860 536,886 544,910 500,954 510,940 524,950 456,904 500,936'] ] },
  { id: '863-057', at: [584, 552], p: [['P', 'M644 720l30-6l180 130v26l-34 2l-60 12l-26-10l-90-20l-8-50z'], ['W', 'M656 776l40-30l90 70l30 8l-50 40l-100-40z'], ['H', 'M650 724l22-4l130 96l-20 8zM634 846l60 30l50 10l-6 14l-90-14l-10-10zM760 880l70-36l20 6l-4 18l-60 14z'], ['D', 'M726 700l14-28l16 4l-4 30l-6 60l-20-20zM710 836l6-44l70-56l14 14l0 20l-20 8l-14 26z'], ['H', 'M626 760l20-10l10 26l-4 110l-22-6z'], ['M', 'M706 770l10-6l6 10l-10 10z'], ['S', 'M650 726l90 56M768 874l70-28'], ['c', '760,706 784,710 764,730 758,742 812,744 826,746 818,768 822,780 680,784 676,812 742,832 756,828 738,850 750,860 676,740'] ] },
  { id: '863-058', at: [889, 552], p: [['H', 'M944 692l88 0v110l-30-14l-58-60z'], ['P', 'M944 692q40 30 56 70t28 50l-26-8l-56-60z'], ['H', 'M1046 692l50 20l46-26l12 30v96l-40 16h-68z'], ['M', 'M1086 736l44-34l4 40l-20 30zM1000 944l80-30l0-30l-40 34z'], ['D', 'M940 750l40 30l6 24l-16-4l-28-24z'], ['H', 'M988 880h94v34l-44 22l-30 14l-18 22z'], ['W', 'M1022 668q14-10 28 4q-2 14-16 14q-14-4-12-18zM1058 940q16-8 26 6q-4 16-16 12q-14-4-10-18z'], ['S', 'M1052 810l70-40l28-10M1004 884v56M990 930l80-20'], ['c', '932,762 934,776 960,808 962,824 970,820 1000,812 1030,956 1108,748'] ] },
  { id: '863-060', at: [1193, 552], p: [['M', 'M1258 690l22-14l20 12l-6 18l-16 8l-18-12zM1342 670l18-12l22 12l-4 14l-14 8l-18-10z'], ['D', 'M1262 692l18-10l14 8l-14 10zM1346 672l14-8l16 8l-14 8z'], ['M', 'M1322 752q4-18 20-18l40 8l50 30q4 10 0 30q-10 24-40 24l-70-44z'], ['D', 'M1336 750l20-10l18 10l-18 12zM1366 764l16-8l14 10l-14 10zM1396 780l20-8l12 10l-18 12z'], ['D', 'M1248 806l14-18l28 4l14 18l-12 18l-28-2zm12 4l10 10l18 0l4-12l-10-10l-14 0z'], ['F', 'M1400 906q-10-26 4-30q20-2 18 22'], ['D', 'M1438 764l8 0v16l-8 0z'], ['P', 'M1266 656q8-6 14 0t-14 6zM1350 646q8-6 12 0t-12 4z'], ['T', 'M1276 716v80M1380 684v80'], ['c', '1250,656 1334,646 1326,676 1316,698 1344,700 1348,714 1348,726 1336,716 1412,728 1442,744 1398,740 1300,752 1270,770 1248,772 1290,776 1306,780 1320,808 1246,830 1278,842 1294,842 1394,838 1408,836 1424,836 1394,860 1412,860 1424,862 1378,890 1398,928 1406,928 1424,920 1424,886'] ] }
]

/* Fifth row: only the upper part of each drawing fits in the pane */
const artLow = [
  { x: 10, p: [['M', 'M32 366l82-138l8-22l16 22l2 16l-66 132h-40z'], ['W', 'M116 228l8-4l6 8l-6 10l-8-6zM38 356l6-6l4 10l-6 12z'], ['D', 'M44 194l24-20l4 20l-18 30l-8-12zM116 320l8-6l6 26l-8 12l-8-14z'], ['T', 'M78 182h14l-42 130h22M64 270l20 0'], ['S', 'M58 330l58-94M60 340l58-84'], ['c', '64,120 86,126 40,156 56,150 72,150 90,146 32,176 38,190 48,214 134,310 112,322 136,366 126,356 66,276 80,250'] ] },
  { x: 160, p: [['F', 'M184 128l20-42l0 60l-20 30z'], ['L', 'M184 176l20-30l12 8l-18 40z'], ['D', 'M216 214l24-32v36l-20 38zM278 186l6 0l4 76l-8-10zM190 320l28-20l4 78h-32zM192 292l22-28v14l-18 28z'], ['F', 'M234 256l24-32v50l-24 28z'], ['L', 'M232 302l24-24l10 12l-18 46z'], ['D', 'M236 366l16-18l8 10l-10 20z'], ['c', '192,66 184,72 202,74 212,134 220,150 220,168 224,188 264,190 262,220 218,270 222,298 184,280 186,304 268,278 274,300 272,320 240,322 256,332 268,344 230,350 264,360 282,252 280,282'] ] },
  { x: 310, p: [['L', 'M358 136l10 4l12 44l8 10l-8 2l-20-34z'], ['M', 'M358 250q2-24 8-14l34 50l8 40v52h-30q-20-50-20-128z'], ['W', 'M364 262q6-12 20 10l16 54l-8 10l-22-30z'], ['H', 'M362 240l26 20l12 30l-12 0z'], ['D', 'M382 226l10 4v18l-10-4zM394 202l4 0l0 14h-4zM390 222l6 0l0 12h-6z'], ['c', '362,150 382,160 396,188 406,194 410,210 396,214 410,224 398,240 410,250 398,256 384,234 352,290 374,270 360,310 350,322 412,350 402,300 426,356 400,370 384,220 404,270'] ] },
  { x: 461, p: [['M', 'M486 128l24-40l16 0l-4 30l-34 42z'], ['L', 'M504 158l22-30l24 14l-22 52l-22-16z'], ['W', 'M516 158l10-18l10 10l-10 20z'], ['K', 'M502 140l22-24M520 230l6-16l10 14l-8 18zM552 350l14 26'], ['M', 'M484 208l30 50l0 26l-12 0l-18-40z'], ['D', 'M498 362l40-64v14l-36 62zM540 158l10 0v20l-6 0zM518 78l8 16l-4 14z'], ['c', '508,84 530,76 490,100 520,112 532,120 488,160 490,180 504,180 552,136 558,154 538,180 552,186 504,198 516,210 540,200 554,204 486,264 524,256 526,284 514,306 536,292 520,340 548,338 558,346 570,352 508,236 546,230'] ] },
  { x: 611, p: [['L', 'M632 156l52-76l6 18l-54 86z'], ['L', 'M638 208l34-60q14-16 20-20l38 52l-14 34l-44 54z'], ['W', 'M670 192l14-18l16 16l-14 26z'], ['K', 'M638 208l34-60q14-16 20-20l38 52l-14 34l-44 54zM662 358l40-46M702 320l30 50M672 366q14-14 26 8'], ['c', '658,96 632,136 700,156 704,250 712,264 686,286 688,300 662,284 660,296 726,254 706,292'] ] },
  { x: 761, p: [['M', 'M796 204l50-82l2 22l-44 76l-2 80l-8 0z'], ['M', 'M834 132l12-8v50l-16 6zM828 250l32-60l18-24v26l-40 60zM810 230l8 0v146h-10z'], ['D', 'M786 300l10-16v94h-10zM838 290l10-16l0 104h-8zM854 318l32-48l-6 28l-24 28z'], ['F', 'M798 280v-70l46-84M832 270l44-84'], ['c', '876,124 860,136 876,156 834,184 824,216 790,250 800,300 878,246 884,262 866,340 862,300 830,346 822,200 848,156'] ] },
  { x: 911, p: [['D', 'M960 102l44 64l2 50l4 50l-12-18l-10-34l-24-14zm8 22v30l16 20v-30zm20 30v30l12 16v-24zm-20 16v20l14 10v-14z'], ['D', 'M998 94l6 6v24l-6-6zM946 310l20-12v80h-16zm7 10v20l8-6v-20zM976 304l2 0v56h-2z'], ['K', 'M1020 348l-20 30M978 356l6 8'], ['c', '984,78 974,96 990,96 1008,108 964,112 994,120 988,296 962,278 974,320 978,350 982,370 1006,366 1018,350 1012,350'] ] },
  { x: 1061, p: [['P', 'M1112 214l14-6l60 90l2 68l-10 0q-60-50-78-130z'], ['L', 'M1120 232l68 88l2 26l-10 0l-56-70l-22-30z'], ['L', 'M1086 300l4-46l8 0q20 80 96 122h-60z'], ['D', 'M1090 254l8 0q20 70 80 110l-16 0q-60-40-72-110zM1120 212l8-6l4 16l-8 8z'], ['W', 'M1126 258h4v14h-4zM1142 280h4v14h-4zM1158 300h4v14h-4z'], ['c', '1130,176 1116,196 1132,204 1106,228 1094,248 1088,280 1112,262 1096,232'] ] },
  { x: 1211, p: seat(0) },
  { x: 1361, p: [...seat(147), ['D', 'M1464 124l16 14v18l-14-8z'], ['K', 'M1480 140v66M1464 116v90'], ['c', '1458,186 1468,208 1482,196 1476,226 1484,236'] ] }
]

const ticks = list => list.split(' ').map(s => {
  const [x, y] = s.split(',').map(Number)
  return (x + y) % 4 < 2 ? `M${x - 2} ${y - 4}h4v5h-4zM${x} ${y + 4}v9` : `M${x - 3} ${y}h10M${x + 7} ${y - 2}h3v5h-3z`
}).join('')
const build = (a, key, box) => ({ key, id: a.id, box, parts: a.p.map(([k, d]) => (k === 'c' ? { k, d: ticks(d) } : { k, d })) })
const thumbs = [
  ...art.map(a => build(a, a.id, `${a.at[0]} ${a.at[1]} 300 522`)),
  ...artLow.map(a => build(a, a.x, `${a.x} 30 148 522`))
]

const rows = [
  ['00', '800-010', ['drivers cap', '------------------------------']],
  ['01', '801-010', ['floor pan']],
  ['01', '801-030', ['bumper bracket', 'bow'], '3-stage'],
  ['03', '803-000', ['front frame', 'cross member'], '', 'PR:01I+11B'],
  ['03', '803-002', ['front frame', 'cross member'], '', 'PR:01I+11C'],
  ['03', '803-004', ['front frame', 'cross member'], '', 'PR:01P'],
  ['03', '803-040', ['bracket for battery']],
  ['03', '803-080', ['cargo platform', 'retainer for flap']],
  ['03', '803-090', ['fender', 'support mounting']],
  ['03', '803-092', ['fender', 'support mounting'], '', 'PR:01P'],
  ['05', '805-000', ['front panel', 'transverse roof rack']],
  ['07', '807-010', ['bumper'], '3-stage'],
  ['09', '809-000', ['side panel', 'side panel', 'pillar a', 'pillar b']],
  ['13', '813-000', ['rear panel - cab']],
  ['17', '817-010', ['roof', 'roof ventilador'], '', 'PR:3R0'],
  ['17', '817-015', ['roof', 'roof ventilador'], '', 'PR:3R8'],
  ['19', '819-000', ['fresh air', 'and heater controls']],
  ['20', '820-010', ['ventilation box']],
  ['20', '820-050', ['clamping strip for battery', 'tube-/hose line', 'air conditioner']],
  ['21', '821-010', ['fender']],
  ['31', '831-000', ['door', 'check rod - door']],
  ['37', '837-000', ['door handle, outer', 'door latch']]
]

const footer = ['MARKET', 'ORDER', 'EC', 'TC', 'ITC', 'VIN NUMBER', 'PRODUCTION', 'SALES TYPE', 'CAT']
</script>

<template>
  <div class="page">
    <svg class="defs" aria-hidden="true">
      <defs>
        <linearGradient id="gm" x1="0" y1="0" x2="1" y2="1"><stop offset="0" stop-color="#b5c8d2" /><stop offset=".5" stop-color="#8aa5b4" /><stop offset="1" stop-color="#64869a" /></linearGradient>
        <linearGradient id="gl" x1="0" y1="0" x2="1" y2="1"><stop offset="0" stop-color="#c5d3da" /><stop offset=".5" stop-color="#e3ebef" /><stop offset="1" stop-color="#a9bcc7" /></linearGradient>
        <linearGradient id="gd" x1="0" y1="0" x2="1" y2="1"><stop offset="0" stop-color="#7592a1" /><stop offset="1" stop-color="#587789" /></linearGradient>
        <pattern id="gh" width="26" height="22" patternUnits="userSpaceOnUse"><rect width="26" height="22" fill="#b4c5ce" /><path d="M1 4l8 5l5-6M13 9l8 4l4-7M4 18l7-4l5 5l7-3" stroke="#6b8492" stroke-width="2" fill="none" /><circle cx="5" cy="12" r="2" fill="#e4ebef" /><circle cx="19" cy="4" r="2" fill="#e4ebef" /></pattern>
      </defs>
    </svg>

    <div class="topbar"></div>
    <header class="head">
      <div class="brand">
        <svg viewBox="0 0 38 38" width="38" height="38" aria-hidden="true"><g fill="none" stroke="#12427a"><circle cx="19" cy="19" r="17.500" stroke-width="2" /><path d="M13 4l6 14l6-14M5 10l8 20l6-12l6 12l8-20" stroke-width="3" /></g></svg>
        <span>Caminhões</span><span>Ônibus</span>
      </div>
      <div class="lead">
        <div class="suggest"><span class="tiny">FI SUGGESTION</span><b>19/25-380T</b></div>
        <nav class="tabs">
          <button v-for="t in tabs" :key="t.label" type="button" class="tab" :class="t.state" :disabled="t.state === 'off'">{{ t.label }}</button>
        </nav>
      </div>
      <div class="info">
        <label class="tiny stock">STOCK<input type="checkbox"></label>
        <span class="tiny">CUSTOMER NO.</span><span class="tiny">ORDER FORM</span><span class="tiny">DEPOT ORDER FORM</span>
      </div>
      <div class="petka"><strong>PETKA</strong><span>Digital Eliteboard</span></div>
    </header>

    <div class="bar">
      <form class="filters">
        <div v-for="f in filters" :key="f.id" class="field" :class="f.id">
          <label class="tiny" :for="f.id">{{ f.label }}</label>
          <div class="drop"><select :id="f.id"><option>{{ f.value }}</option></select></div>
        </div>
      </form>
      <div class="tools">
        <div v-for="(g, i) in toolbar" :key="i" class="toolset" :class="{ wide: i === 0 }">
          <button v-for="b in g" :key="b.name" type="button" class="tool" :class="{ off: b.off }" :disabled="b.off" :aria-label="b.name">
            <span v-if="b.text" class="glyph">{{ b.text }}</span>
            <svg v-if="b.p" viewBox="0 0 37 26" aria-hidden="true"><path v-for="(q, j) in b.p" :key="j" :class="q[0]" :d="q[1]" /></svg>
            <span v-if="b.sub" class="sub">{{ b.sub }}</span>
          </button>
        </div>
      </div>
    </div>

    <main class="body">
      <section class="left">
        <div class="title">
          <h2 class="main">MAIN GROUP SELECTION</h2>
          <button type="button" class="eye" aria-label="Hide"><svg viewBox="0 0 22 22" width="20" height="20"><path d="M2 12q4-6 9-5q5 0 9 4q-4 6-9 5q-6 0-9-4M9 15q-2-6 4-7M7 20L16 3M11 20l8-14" /></svg></button>
        </div>
        <ul class="groups">
          <li v-for="g in groups" :key="g[0]"><button type="button" :class="{ on: selected === g[0] }" @click="selected = g[0]"><span>{{ g[0] }}</span>{{ g[1] }}</button></li>
        </ul>
        <div class="title second">
          <h2>ILLUSTRATION SELECTION</h2>
          <button type="button" class="view" aria-label="View"><svg viewBox="0 0 34 20" width="33" height="20"><path d="M3 7h5v6H3zM10 7h5v6h-5zM16 7h5v6h-5zM19 5V3h11v14H19v-2M23 10h3M24 9v3" /></svg></button>
        </div>
        <div class="pane">
          <div class="grid">
            <button v-for="t in thumbs" :key="t.key" type="button" class="cell">
              <svg :viewBox="t.box" preserveAspectRatio="none" aria-hidden="true"><path v-for="(s, i) in t.parts" :key="i" :class="s.k" :d="s.d" /></svg>
              <span v-if="t.id">{{ t.id }}</span>
            </button>
          </div>
          <div class="scroll a"><i class="up"></i><i class="thumb"></i><i class="down"></i></div>
        </div>
      </section>

      <section class="right">
        <div class="list">
          <table>
            <thead><tr><th class="mg">MG</th><th class="sg">SG</th><th class="il">ILL-NO.</th><th>NAME</th><th class="rm">REMARK</th><th class="md">MODEL</th></tr></thead>
            <tbody>
              <tr v-for="r in rows" :key="r[1]">
                <td class="mg">8</td><td class="sg">{{ r[0] }}</td><td>{{ r[1] }}</td>
                <td><div v-for="(l, i) in r[2]" :key="i">{{ l }}</div></td>
                <td>{{ r[3] }}</td><td>{{ r[4] }}</td>
              </tr>
            </tbody>
          </table>
        </div>
        <div class="scroll b"><i class="up"></i><i class="thumb"></i><i class="down"></i></div>
      </section>
    </main>

    <footer class="foot">
      <div class="lex"><span>LEX</span><span>COM</span></div>
      <div v-for="f in footer" :key="f" class="item"><span class="tiny">{{ f }}</span><b v-if="f === 'CAT'">2DN</b></div>
    </footer>
  </div>
</template>

<style>
html, body { margin: 0; background: #fff; }
</style>

<style scoped>
* { box-sizing: border-box; }
.page { height: 100vh; display: flex; flex-direction: column; overflow: hidden; background: #fff; color: #000; font-family: "Liberation Sans", Arial, sans-serif; font-size: 16px; }
button { font-family: inherit; padding: 0; margin: 0; }
.defs { position: absolute; width: 0; height: 0; }
.tiny { font-size: 9px; line-height: 11px; color: #000; white-space: nowrap; }
.topbar { height: 11px; flex: none; border-top: 1px solid #fff; background: linear-gradient(#9c9c9c 2px, #19518d 2px); }

.head { height: 95px; flex: none; display: flex; border-bottom: 1px solid #474f54; }
.brand { width: 161px; flex: none; display: flex; flex-direction: column; align-items: center; padding: 12px 53px 0 0; font: bold 9px/11px "Noto Sans", sans-serif; color: #12427a; }
.brand svg { margin-bottom: 6px; }
.lead { flex: 1; display: flex; flex-direction: column; justify-content: space-between; }
.suggest { display: flex; flex-direction: column; padding: 16px 0 0 9px; font-size: 13px; line-height: 18px; }
.tabs { display: flex; align-items: flex-end; gap: 5px; height: 30px; margin-bottom: -1px; }
.tab { height: 25px; border: 1px solid #474f54; border-radius: 6px 6px 0 0; background: #f2f2f2; font-size: 13px; font-weight: bold; color: #000; white-space: nowrap; }
.tab:nth-child(1) { width: 54px; }
.tab:nth-child(2) { width: 54px; }
.tab:nth-child(3) { width: 78px; }
.tab:nth-child(4) { width: 167px; }
.tab:nth-child(5) { width: 195px; }
.tab.active { height: 29px; background: #fff; border-bottom-color: #fff; }
.tab.off { color: #b4b7b9; }
.info { display: grid; grid-template-columns: 119px 178px 180px 198px; padding-top: 16px; }
.stock { display: flex; flex-direction: column; gap: 4px; }
.stock input { appearance: none; width: 16px; height: 16px; margin: 0; border: 2px solid #a3a7a9; background: #fff; }
.petka { width: 127px; display: flex; flex-direction: column; padding-top: 26px; white-space: nowrap; font: bold 13px/14px Lato, sans-serif; color: #2e2e30; }
.petka strong { font: 900 35px/38px Roboto, "Liberation Sans", sans-serif; background: linear-gradient(90deg, #a30f14 18px, #5c2a2b 40px, #3a3233 65px, #2e2e30 80px); -webkit-background-clip: text; background-clip: text; color: transparent; }

.bar { flex: none; display: flex; justify-content: space-between; padding: 8px 17px 7px 9px; }
.filters { display: flex; gap: 9px; margin-top: 11px; }
.field { display: flex; flex-direction: column; gap: 2px; }
.field .tiny { padding-left: 2px; }
.fi { width: 187px; margin-right: 2px; }
.model { width: 68px; }
.year { width: 82px; }
.mg.field { width: 42px; }
.sg.field { width: 44px; }
.ill { width: 80px; }
.drop { position: relative; height: 22px; }
.drop select { appearance: none; width: 100%; height: 22px; margin: 0; padding: 0 18px 0 5px; border: 1px solid #474f54; border-radius: 0; background: #fff; color: #000; font: bold 13px/20px "Liberation Sans", Arial, sans-serif; opacity: 1; }
.drop::before { content: ""; position: absolute; right: 2px; top: 2px; width: 15px; height: 18px; background: #474f54; pointer-events: none; }
.drop::after { content: ""; position: absolute; right: 6px; top: 10px; border: 4px solid transparent; border-top-color: #fff; border-bottom: 0; pointer-events: none; }
.tools { display: flex; gap: 19px; }
.toolset { display: grid; grid-template-columns: repeat(3, 37px); grid-auto-rows: 26px; gap: 8px 6px; }
.toolset.wide { grid-template-columns: repeat(4, 37px); }
.tool { position: relative; border: 1px solid #474f54; border-radius: 4px; background: #f3f4f5; color: #474f54; overflow: hidden; }
.tool.off { border-color: #b5b7b9; color: #c2c2c2; }
.tool svg { display: block; width: 35px; height: 24px; }
.tool path { fill: none; stroke: currentColor; }
.tool path.f { fill: currentColor; stroke: none; }
.tool path.s { stroke-width: 2; }
.tool path.n { stroke-width: 1; }
.tool path.b { stroke: #f3f4f5; stroke-width: 1; }
.glyph { font-size: 20px; line-height: 22px; }
.sub { position: absolute; left: 0; right: 0; bottom: 0; font: 8px/9px "DejaVu Sans", sans-serif; text-align: center; }

.body { flex: 1; min-height: 0; display: grid; grid-template-columns: minmax(0, 1360fr) minmax(0, 1174fr); gap: 12px; padding-left: 9px; margin-bottom: 8px; }
.left { display: flex; flex-direction: column; min-height: 0; }
.title { display: flex; gap: 2px; height: 22px; flex: none; }
.title h2 { flex: 1; margin: 0; padding-left: 5px; border: 1px solid #000; background: #f2f2f2; font-size: 13px; line-height: 20px; }
.title h2.main { background: #e8e8e8; }
.title button { border: 1px solid #474f54; background: #f3f4f5; }
.title svg { display: block; fill: none; stroke: #474f54; }
.eye { width: 23px; }
.title .eye { border-color: #c8c8c8; }
.title .eye svg { stroke: #aaa; }
.view { width: 35px; }
.second { margin-top: 8px; }
.groups { flex: none; list-style: none; margin: 1px 0 0; padding: 0; display: grid; grid-auto-flow: column; grid-template-rows: repeat(5, 24px); grid-template-columns: 1fr 1fr; column-gap: 3px; }
.groups li { box-shadow: inset 0 1px #bdbdbd; }
.groups li:nth-child(5n) { box-shadow: inset 0 1px #bdbdbd, 0 1px #bdbdbd; }
.groups button { display: flex; width: 100%; height: 24px; padding-left: 6px; border: 0; background: none; font-size: 16px; line-height: 24px; font-weight: bold; color: #000; text-align: left; }
.groups button span { width: 25px; }
.groups .on { box-shadow: inset 0 0 0 2px #474f54; }
.pane { flex: 1; min-height: 0; display: flex; justify-content: space-between; gap: 6px; margin-top: 2px; overflow: hidden; }
.grid { flex: 1; display: grid; grid-template-columns: repeat(10, minmax(0, 1fr)); grid-auto-rows: 174px; gap: 2px; }
.cell { position: relative; border: 1px solid #a6aab0; background: #fff; }
.cell svg { position: absolute; inset: 0; width: 100%; height: 100%; }
.cell span { position: absolute; right: 4px; bottom: 0; font-size: 13px; line-height: 14px; font-weight: bold; color: #000; }
.cell path { fill: none; stroke: #4a6270; stroke-width: 1; stroke-opacity: .7; vector-effect: non-scaling-stroke; }
.cell path.D { fill: url(#gd); fill-rule: evenodd; }
.cell path.M { fill: url(#gm); fill-rule: evenodd; }
.cell path.L { fill: url(#gl); }
.cell path.H { fill: url(#gh); stroke-opacity: .5; }
.cell path.P { fill: #dde5e9; stroke-opacity: .3; }
.cell path.W { fill: #fff; }
.cell path.S { stroke-width: 2; stroke: #6e8b9b; stroke-opacity: 1; }
.cell path.F { stroke-width: 3; stroke: #567283; stroke-opacity: 1; }
.cell path.K { stroke: #3c505c; }
.cell path.N { stroke: #31444f; stroke-opacity: .6; }
.cell path.T { stroke: #b4b9bc; }
.cell path.c { stroke: #3a444a; stroke-opacity: .45; }

.right { display: flex; min-height: 0; gap: 1px; }
.list { flex: 1; min-width: 0; overflow: hidden; }
table { width: 100%; table-layout: fixed; border-spacing: 0; font-weight: bold; }
th, td { padding: 0; text-align: left; vertical-align: top; }
th { height: 22px; border: solid #000; border-width: 1px 0; background: #f2f2f2; font-size: 13px; line-height: 20px; }
th:first-child { border-left-width: 1px; }
th:last-child { border-right-width: 1px; }
th.mg { width: 40px; padding-left: 5px; }
th.sg { width: 32px; }
th.il { width: 72px; }
th.rm { width: 102px; }
th.md { width: 105px; }
tbody::before { content: ""; display: block; height: 1px; }
td { line-height: 24px; box-shadow: inset 0 1px #bdbdbd; white-space: nowrap; }
td.mg { padding-left: 12px; }
.scroll { width: 16px; flex: none; display: flex; flex-direction: column; justify-content: space-between; background: #efefef; }
.scroll i { display: flex; height: 17px; flex: none; justify-content: center; align-items: center; }
.scroll .up::before, .scroll .down::before { content: ""; width: 5px; height: 5px; border: solid #505050; border-width: 2px 0 0 2px; transform: rotate(45deg); }
.scroll .down::before { transform: rotate(225deg); }
.scroll .thumb { background: #cdcdcd; height: auto; }
.scroll.a .thumb { flex: 611 1 0; }
.scroll.a .down { flex: 192 1 0; align-items: flex-end; padding-bottom: 6px; }
.scroll.b .thumb { flex: 418 1 0; }
.scroll.b .down { flex: 560 1 0; align-items: flex-end; padding-bottom: 6px; }

.foot { height: 31px; flex: none; display: grid; grid-template-columns: 159fr 320fr 361fr 150fr 137fr 320fr 402fr 264fr 357fr 85fr; background: #19518d; color: #fff; }
.foot > * { min-width: 0; padding-top: 4px; }
.foot .tiny { color: #e4ebf2; display: block; }
.item b { display: block; font-size: 13px; line-height: 14px; }
.foot .lex { width: 25px; height: 26px; margin: 4px 0 0 6px; padding: 4px 0 0 1px; display: flex; flex-direction: column; border: solid #fff; border-width: 1px 1px 0 0; font: bold 9px/10px "Liberation Sans", sans-serif; }
</style>
